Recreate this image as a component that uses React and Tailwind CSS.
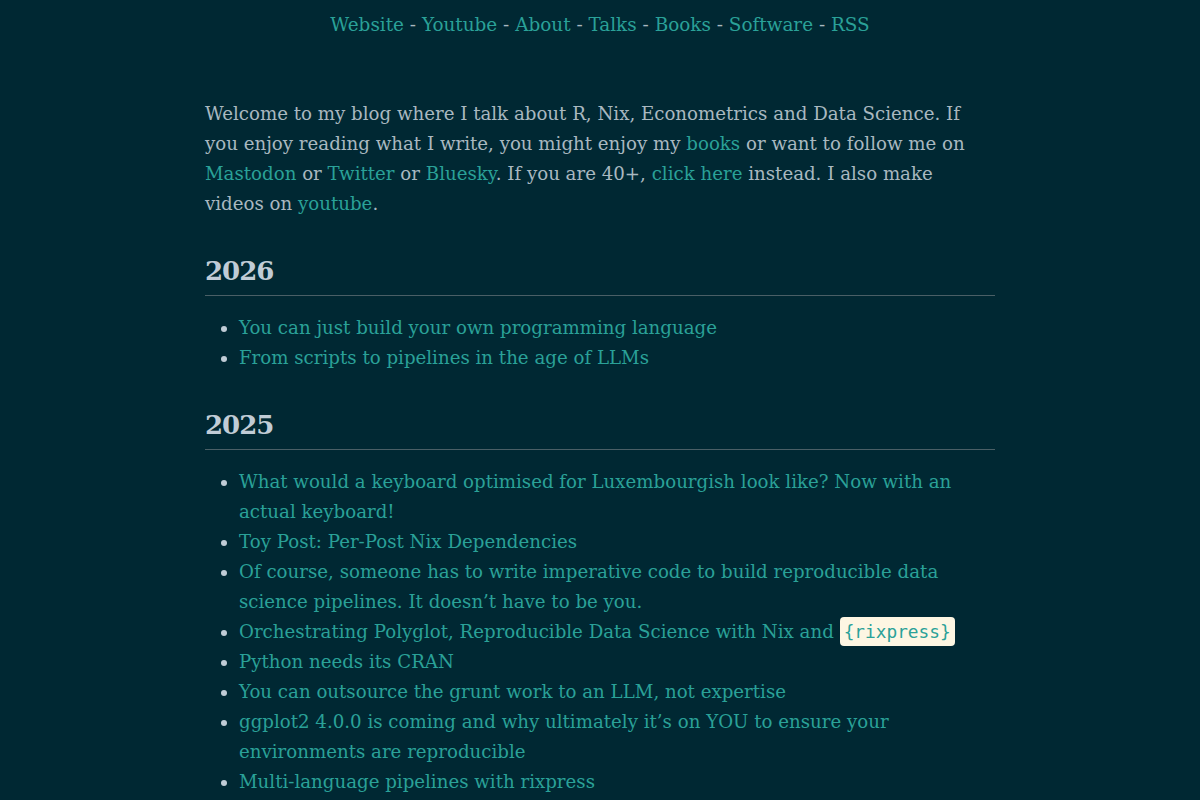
import React from "react";

const nav = ["Website", "Youtube", "About", "Talks", "Books", "Software", "RSS"];

const posts = [
  {
    year: "2026",
    items: [
      "You can just build your own programming language",
      "From scripts to pipelines in the age of LLMs",
    ],
  },
  {
    year: "2025",
    items: [
      "What would a keyboard optimised for Luxembourgish look like? Now with an actual keyboard!",
      "Toy Post: Per-Post Nix Dependencies",
      "Of course, someone has to write imperative code to build reproducible data science pipelines. It doesn’t have to be you.",
      "RIXPRESS",
      "Python needs its CRAN",
      "You can outsource the grunt work to an LLM, not expertise",
      "ggplot2 4.0.0 is coming and why ultimately it’s on YOU to ensure your environments are reproducible",
      "Multi-language pipelines with rixpress",
    ],
  },
];

function Link({ children }) {
  return <a href="#" className="text-[#2aa198] no-underline">{children}</a>;
}

export default function App() {
  return (
    <div className="min-h-screen bg-[#002833] text-[#a9b8c0] font-['DejaVu_Serif',serif] text-[18.2px] leading-[30px]">
      {/* top navigation */}
      <nav className="pt-[10px] text-center text-[18.4px]">
        {nav.map((n, i) => (
          <span key={n}>
            {i > 0 && " - "}
            <Link>{n}</Link>
          </span>
        ))}
      </nav>

      <main className="w-[790px] mx-auto mt-[59px]">
        <p>
          Welcome to my blog where I talk about R, Nix, Econometrics and Data Science. If you enjoy
          reading what I write, you might enjoy my <Link>books</Link> or want to follow me on{" "}
          <Link>Mastodon</Link> or <Link>Twitter</Link> or <Link>Bluesky</Link>. If you are 40+,{" "}
          <Link>click here</Link> instead. I also make videos on <Link>youtube</Link>.
        </p>

        {posts.map((g) => (
          <section key={g.year}>
            <h2 className="mt-[34px] pb-[6px] border-b border-[#4a5f66] text-[26px] tracking-[-1px] leading-[36px] font-bold text-[#c0ccd6]">
              {g.year}
            </h2>
            <ul className="mt-[17px] pl-[34px] list-disc marker:text-[#c0ccd6]">
              {g.items.map((t) => (
                <li key={t}>
                  {t === "RIXPRESS" ? (
                    <Link>
                      Orchestrating Polyglot, Reproducible Data Science with Nix and{" "}
                      <code className="px-[4px] py-[4px] rounded-[4px] bg-[#fdf6e3] text-[#2aa198] font-['DejaVu_Sans_Mono',monospace] text-[17.8px]">
                        {"{rixpress}"}
                      </code>
                    </Link>
                  ) : (
                    <Link>{t}</Link>
                  )}
                </li>
              ))}
            </ul>
          </section>
        ))}
      </main>
    </div>
  );
}
